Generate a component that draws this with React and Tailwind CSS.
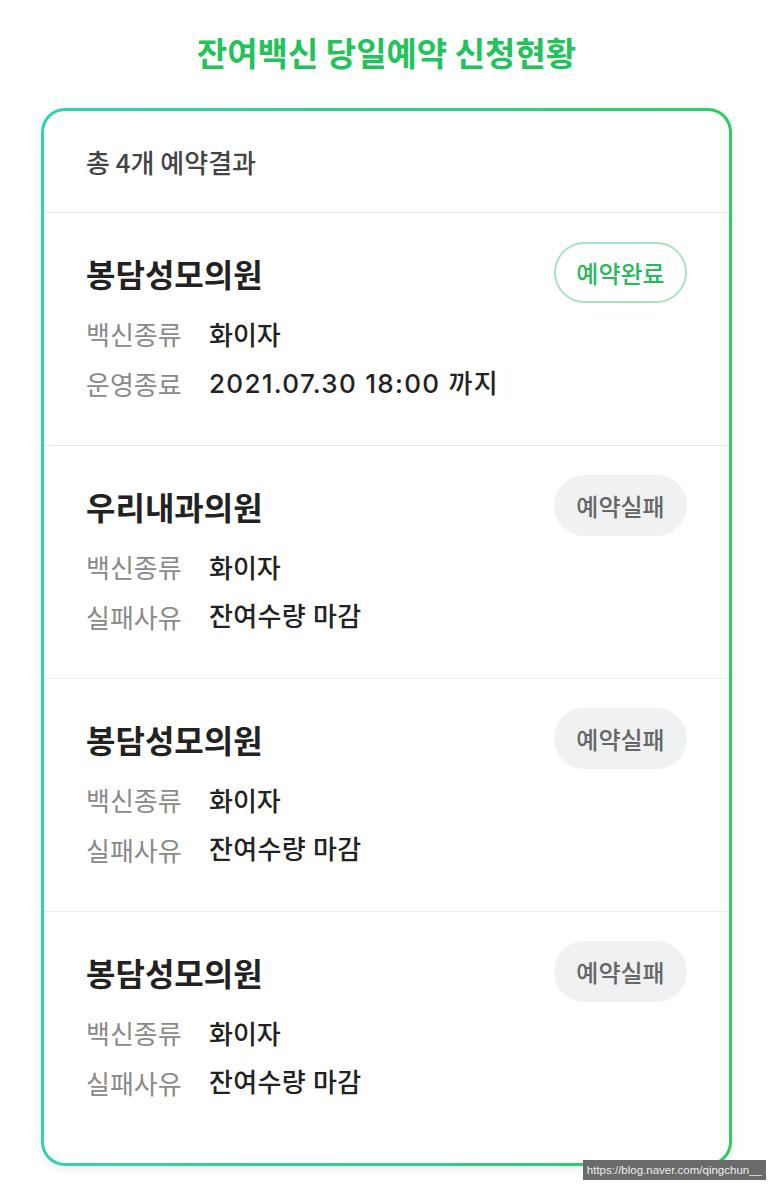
const results = [
  {
    id: 1,
    name: "봉담성모의원",
    success: true,
    vaccine: "화이자",
    label: "운영종료",
    detail: "2021.07.30 18:00 까지",
    wide: true,
  },
  {
    id: 2,
    name: "우리내과의원",
    success: false,
    vaccine: "화이자",
    label: "실패사유",
    detail: "잔여수량 마감",
  },
  {
    id: 3,
    name: "봉담성모의원",
    success: false,
    vaccine: "화이자",
    label: "실패사유",
    detail: "잔여수량 마감",
  },
  {
    id: 4,
    name: "봉담성모의원",
    success: false,
    vaccine: "화이자",
    label: "실패사유",
    detail: "잔여수량 마감",
  },
];

function StatusBadge({ success }) {
  if (success) {
    return (
      <div className="h-[61px] w-[133px] rounded-full border-2 border-[#a8e4c0] flex items-center justify-center text-[24px] text-[#27b95a] font-medium">
        예약완료
      </div>
    );
  }
  return (
    <div className="h-[61px] w-[133px] rounded-full bg-[#f0f1f3] flex items-center justify-center text-[24px] text-[#666] font-medium">
      예약실패
    </div>
  );
}

function ResultItem({ item, last }) {
  return (
    <div
      className={`px-[42px] pt-[29px] ${
        last ? "pb-[56px]" : "pb-[37px] border-b border-[#ededed]"
      }`}
    >
      <div className="flex items-center justify-between mb-[5px]">
        <p className="text-[32px] font-bold text-[#222]">{item.name}</p>
        <StatusBadge success={item.success} />
      </div>
      <div className="flex items-center h-[50px] text-[26px]">
        <span className="w-[123px] text-[#8a8a8a]">백신종류</span>
        <span className="text-[#222] font-medium">{item.vaccine}</span>
      </div>
      <div className="flex items-center h-[50px] text-[26px]">
        <span className="w-[123px] text-[#8a8a8a]">{item.label}</span>
        <span
          className={`text-[#222] font-medium font-['Inter','Noto_Sans_CJK_KR',sans-serif] ${
            item.wide ? "tracking-[1.3px]" : "tracking-[0.3px]"
          }`}
        >
          {item.detail}
        </span>
      </div>
    </div>
  );
}

export default function App() {
  return (
    <div
      className="relative h-[1186px] w-[773px] bg-white overflow-hidden"
      style={{ fontFamily: '"Noto Sans CJK KR", "Noto Sans", sans-serif' }}
    >
      <h1 className="pt-[32px] h-[72px] leading-[40px] text-center text-[33px] font-bold text-[#22c35a]">
        잔여백신 당일예약 신청현황
      </h1>
      <div className="mt-[36px] mx-[41px] rounded-[24px] p-[3px] bg-gradient-to-r from-[#35d0b4] to-[#2ecb62] shadow-[0_3px_10px_rgba(0,0,0,0.08)]">
        <div className="bg-white rounded-[21px]">
          <div className="px-[42px] pt-[34px] pb-[33px] border-b border-[#ededed]">
            <p className="text-[26px] leading-[34px] text-[#444] font-medium">
              총 4개 예약결과
            </p>
          </div>
          {results.map((item, i) => (
            <ResultItem
              key={item.id}
              item={item}
              last={i === results.length - 1}
            />
          ))}
        </div>
      </div>
      <div className="absolute right-[7px] top-[1160px] h-[20px] px-[4px] bg-[#6a6a6a] text-[#eee] text-[11.5px] leading-[20px] font-['Liberation_Sans',sans-serif]">
        https://blog.naver.com/qingchun__
      </div>
    </div>
  );
}
